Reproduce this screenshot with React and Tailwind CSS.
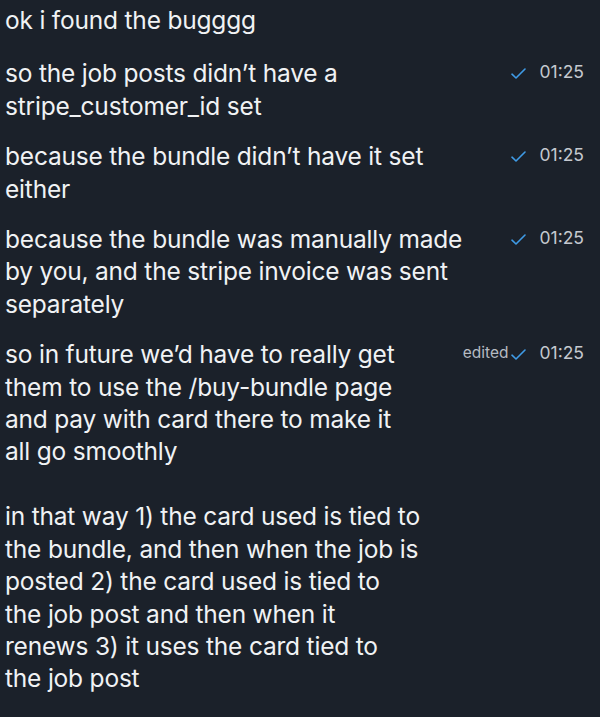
import React from 'react';

const messages = [
  { lines: ['ok i found the bugggg'] },
  { lines: ['so the job posts didn’t have a', 'stripe_customer_id set'], time: '01:25' },
  { lines: ['because the bundle didn’t have it set', 'either'], time: '01:25' },
  {
    lines: ['because the bundle was manually made', 'by you, and the stripe invoice was sent', 'separately'],
    time: '01:25',
  },
  {
    lines: [
      'so in future we’d have to really get',
      'them to use the /buy-bundle page',
      'and pay with card there to make it',
      'all go smoothly',
      '',
      'in that way 1) the card used is tied to',
      'the bundle, and then when the job is',
      'posted 2) the card used is tied to',
      'the job post and then when it',
      'renews 3) it uses the card tied to',
      'the job post',
    ],
    time: '01:25',
    edited: true,
  },
];

const Check = () => (
  <svg width="15" height="11" viewBox="0 0 15 11" fill="none" className="shrink-0 mt-[2px]">
    <path d="M1 6.2 L5 10 L14 1" stroke="#3f9be6" strokeWidth="1.6" strokeLinecap="round" strokeLinejoin="round" />
  </svg>
);

const App = () => {
  return (
    <div
      className="w-[600px] h-[717px] overflow-hidden bg-[#1b212a] text-[#f0f2f4] pt-[4px] flex flex-col gap-[18px]"
      style={{ fontFamily: 'Inter, "Noto Sans", sans-serif' }}
    >
      {messages.map((msg, i) => (
        <div key={i} className={`flex items-start ${i === 0 ? 'mb-[3px]' : ''}`}>
          <div className="pl-[5px] text-[24.5px] leading-[32.4px] tracking-[-0.2px] whitespace-pre">
            {msg.lines.map((line, j) => (
              <div key={j}>{line || ' '}</div>
            ))}
          </div>
          {msg.time && (
            <div className="ml-auto pr-[16px] pt-[5px] flex items-center text-[17.5px] leading-[20px] text-[#c5c9cf]">
              {msg.edited && <span className="text-[15.5px] text-[#b6bbc2] mr-[3px]">edited</span>}
              <Check />
              <span className="ml-[13px]">{msg.time}</span>
            </div>
          )}
        </div>
      ))}
    </div>
  );
};

export default App;
